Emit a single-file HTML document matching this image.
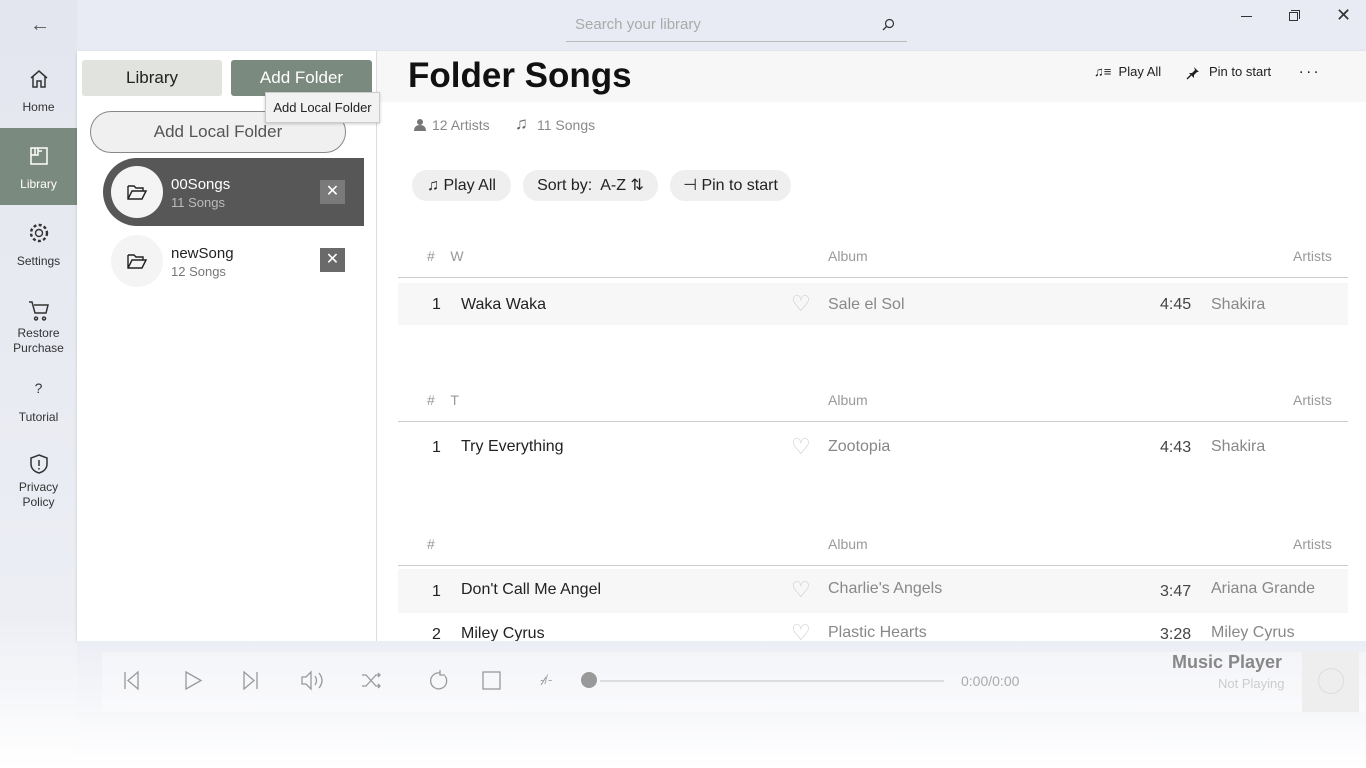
<!DOCTYPE html>
<html><head><meta charset="utf-8"><style>
*{margin:0;padding:0;box-sizing:border-box}
body{width:1366px;height:768px;overflow:hidden;font-family:"Liberation Sans",sans-serif;background:linear-gradient(180deg,#e9ebf4 0%,#eceef5 75%,#fafafc 92%,#fff 100%);position:relative;color:#222}
.abs{position:absolute}
.nav{left:0;top:0;width:77px;height:768px;background:linear-gradient(180deg,#e4e6ef,#eceef4 80%,#fff)}
.navitem{position:absolute;left:0;width:77px;text-align:center;font-size:12px;color:#333}
.navitem svg{display:block;margin:0 auto 10px}
.panel{left:77px;top:51px;width:1289px;height:590px;background:#fff;box-shadow:0 1px 3px rgba(0,0,0,.15)}
.gray{color:#888}
.hdr{font-size:14px;color:#999}
.row{font-size:16px}
.heart{color:#ccc;font-size:22px}
</style></head><body>
<div class="abs nav"></div>
<div class="abs" style="left:30px;top:14px;font-size:20px;color:#555">&#8592;</div>
<div class="abs" style="left:566px;top:14px;width:341px;height:28px;border-bottom:1px solid #bbb;"></div>
<div class="abs" style="left:575px;top:16px;font-size:15px;color:#aaa">Search your library</div>
<svg class="abs" style="left:882px;top:18px" width="13" height="13" viewBox="0 0 13 13"><circle cx="7.5" cy="5.5" r="4" fill="none" stroke="#333" stroke-width="1.2"/><path d="M4.7 8.3L1 12" stroke="#333" stroke-width="1.3"/></svg>
<div class="abs" style="left:1241px;top:16px;width:11px;height:1px;background:#333"></div>
<div class="abs" style="left:1289px;top:12px;width:9px;height:9px;border:1px solid #333"></div>
<div class="abs" style="left:1291px;top:10px;width:9px;height:9px;border-top:1px solid #333;border-right:1px solid #333"></div>
<div class="abs" style="left:1336px;top:5px;font-size:18px;color:#333">&#x2715;</div>
<div class="navitem" style="top:68px"><svg width="22" height="22" viewBox="0 0 22 22"><path d="M3 10L11 3l8 7M5 8v11h4v-6h4v6h4V8" fill="none" stroke="#333" stroke-width="1.5"/></svg>Home</div>
<div class="abs" style="left:0;top:128px;width:77px;height:77px;background:#7b8a7f"></div>
<div class="navitem" style="top:145px;color:#fff"><svg width="22" height="22" viewBox="0 0 22 22"><path d="M3 3h16v16H3zM3 10h7V3M7 3v7M10 6h4" fill="none" stroke="#fff" stroke-width="1.5"/></svg>Library</div>
<div class="navitem" style="top:222px"><svg width="22" height="22" viewBox="0 0 22 22"><circle cx="11" cy="11" r="3.5" fill="none" stroke="#333" stroke-width="1.4"/><circle cx="11" cy="11" r="8" fill="none" stroke="#333" stroke-width="2.4" stroke-dasharray="3 2.3"/></svg>Settings</div>
<div class="navitem" style="top:299px;line-height:15px"><svg width="22" height="22" viewBox="0 0 22 22" style="margin-bottom:5px"><path d="M1 3h3l3 11h11l2-8H6M8 18a1.5 1.5 0 1 0 .1 0M16 18a1.5 1.5 0 1 0 .1 0" fill="none" stroke="#333" stroke-width="1.5"/></svg>Restore<br>Purchase</div>
<div class="navitem" style="top:380px;font-size:14px">?</div>
<div class="navitem" style="top:410px">Tutorial</div>
<div class="navitem" style="top:453px;line-height:15px"><svg width="22" height="22" viewBox="0 0 22 22" style="margin-bottom:5px"><path d="M11 2l8 3v6c0 5-4 8-8 9-4-1-8-4-8-9V5z M11 7v6M11 15v1.5" fill="none" stroke="#333" stroke-width="1.5"/></svg>Privacy<br>Policy</div>

<div class="abs panel"></div>
<div class="abs" style="left:376px;top:51px;width:1px;height:590px;background:#ddd"></div>
<div class="abs" style="left:377px;top:51px;width:989px;height:51px;background:#f7f7f7"></div>
<div class="abs" style="left:82px;top:60px;width:140px;height:36px;background:#e0e3de;border-radius:3px;text-align:center;line-height:36px;font-size:17px">Library</div>
<div class="abs" style="left:231px;top:60px;width:141px;height:36px;background:#7b8a7f;border-radius:3px;text-align:center;line-height:36px;font-size:17px;color:#fff">Add Folder</div>
<div class="abs" style="left:90px;top:111px;width:256px;height:42px;border:1px solid #888;border-radius:21px;background:#f0f0f0;text-align:center;line-height:40px;font-size:17px;color:#555">Add Local Folder</div>
<div class="abs" style="left:265px;top:92px;width:115px;height:31px;background:#f2f2f2;border:1px solid #ccc;box-shadow:0 1px 3px rgba(0,0,0,.2);font-size:13px;line-height:29px;text-align:center">Add Local Folder</div>
<div class="abs" style="left:103px;top:158px;width:261px;height:68px;background:#575757;border-radius:34px 0 0 34px"></div>
<div class="abs" style="left:111px;top:166px;width:52px;height:52px;border-radius:50%;background:#f4f4f4"></div>
<div class="abs" style="left:111px;top:235px;width:52px;height:52px;border-radius:50%;background:#f4f4f4"></div>
<svg class="abs" style="left:127px;top:183px" width="20" height="18" viewBox="0 0 20 18"><path d="M1 3h6l2 2h7v3M1 3v13h14l4-8H5L1 16" fill="none" stroke="#222" stroke-width="1.4"/></svg>
<svg class="abs" style="left:127px;top:252px" width="20" height="18" viewBox="0 0 20 18"><path d="M1 3h6l2 2h7v3M1 3v13h14l4-8H5L1 16" fill="none" stroke="#222" stroke-width="1.4"/></svg>
<div class="abs" style="left:171px;top:176px;font-size:15px;color:#fff">00Songs</div>
<div class="abs" style="left:171px;top:195px;font-size:13px;color:#bbb">11 Songs</div>
<div class="abs" style="left:171px;top:245px;font-size:15px;color:#222">newSong</div>
<div class="abs" style="left:171px;top:264px;font-size:13px;color:#777">12 Songs</div>
<div class="abs" style="left:320px;top:180px;width:25px;height:24px;background:#7a7a7a;color:#fff;text-align:center;line-height:24px;font-size:16px">&#x2715;</div>
<div class="abs" style="left:320px;top:248px;width:25px;height:24px;background:#6a6a6a;color:#fff;text-align:center;line-height:24px;font-size:16px">&#x2715;</div>
<div class="abs" style="left:408px;top:56px;font-size:35px;font-weight:bold;color:#111">Folder Songs</div>
<div class="abs" style="left:1094px;top:64px;font-size:13px">&#9835;&#8801;&nbsp; Play All</div>
<svg class="abs" style="left:1186px;top:66px" width="14" height="14" viewBox="0 0 14 14"><path d="M8 1l5 5-2 0-3 3 0 3-5-5 3 0 3-3z" fill="#222"/><path d="M5 9L1 13" stroke="#222" stroke-width="1.4"/></svg>
<div class="abs" style="left:1209px;top:64px;font-size:13px">Pin to start</div>
<div class="abs" style="left:1299px;top:60px;font-size:16px;letter-spacing:3px">...</div>
<svg class="abs" style="left:414px;top:118px" width="12" height="14" viewBox="0 0 12 14"><circle cx="6" cy="4" r="3" fill="#777"/><path d="M0 13q0-6 6-6t6 6z" fill="#777"/></svg>
<div class="abs gray" style="left:432px;top:117px;font-size:14px">12 Artists</div>
<div class="abs gray" style="left:515px;top:114px;font-size:17px;color:#666">&#9835;</div>
<div class="abs gray" style="left:537px;top:117px;font-size:14px">11 Songs</div>
<div class="abs" style="left:412px;top:170px;width:99px;height:31px;background:#efefef;border-radius:15px;font-size:16px;line-height:31px;text-align:center">&#9835; Play All</div>
<div class="abs" style="left:523px;top:170px;width:135px;height:31px;background:#efefef;border-radius:15px;font-size:16px;line-height:31px;text-align:center">Sort by:&nbsp; A-Z &#8645;</div>
<div class="abs" style="left:670px;top:170px;width:121px;height:31px;background:#efefef;border-radius:15px;font-size:16px;line-height:31px;text-align:center">&#8867; Pin to start</div>
<div class="abs hdr" style="left:427px;top:248px">#&nbsp;&nbsp;&nbsp;&nbsp;W</div>
<div class="abs hdr" style="left:828px;top:248px">Album</div><div class="abs hdr" style="left:1293px;top:248px">Artists</div>
<div class="abs" style="left:398px;top:277px;width:950px;height:1px;background:#ccc"></div>
<div class="abs" style="left:398px;top:283px;width:950px;height:42px;background:#f7f7f7"></div>
<div class="abs row" style="left:432px;top:296px">1</div><div class="abs row" style="left:461px;top:296px">Waka Waka</div>
<div class="abs heart" style="left:791px;top:291px">&#9825;</div>
<div class="abs row gray" style="left:828px;top:296px">Sale el Sol</div><div class="abs row" style="left:1160px;top:296px;color:#444">4:45</div><div class="abs row gray" style="left:1211px;top:296px">Shakira</div>
<div class="abs hdr" style="left:427px;top:392px">#&nbsp;&nbsp;&nbsp;&nbsp;T</div>
<div class="abs hdr" style="left:828px;top:392px">Album</div><div class="abs hdr" style="left:1293px;top:392px">Artists</div>
<div class="abs" style="left:398px;top:421px;width:950px;height:1px;background:#ccc"></div>
<div class="abs row" style="left:432px;top:439px">1</div><div class="abs row" style="left:461px;top:438px">Try Everything</div>
<div class="abs heart" style="left:791px;top:434px">&#9825;</div>
<div class="abs row gray" style="left:828px;top:438px">Zootopia</div><div class="abs row" style="left:1160px;top:439px;color:#444">4:43</div><div class="abs row gray" style="left:1211px;top:438px">Shakira</div>
<div class="abs hdr" style="left:427px;top:536px">#</div>
<div class="abs hdr" style="left:828px;top:536px">Album</div><div class="abs hdr" style="left:1293px;top:536px">Artists</div>
<div class="abs" style="left:398px;top:565px;width:950px;height:1px;background:#ccc"></div>
<div class="abs" style="left:398px;top:569px;width:950px;height:44px;background:#f7f7f7"></div>
<div class="abs row" style="left:432px;top:583px">1</div><div class="abs row" style="left:461px;top:581px">Don't Call Me Angel</div>
<div class="abs heart" style="left:791px;top:577px">&#9825;</div>
<div class="abs row gray" style="left:828px;top:580px">Charlie's Angels</div><div class="abs row" style="left:1160px;top:583px;color:#444">3:47</div><div class="abs row gray" style="left:1211px;top:580px">Ariana Grande</div>
<div class="abs row" style="left:432px;top:626px">2</div><div class="abs row" style="left:461px;top:625px">Miley Cyrus</div>
<div class="abs heart" style="left:791px;top:620px">&#9825;</div>
<div class="abs row gray" style="left:828px;top:624px">Plastic Hearts</div><div class="abs row" style="left:1160px;top:626px;color:#444">3:28</div><div class="abs row gray" style="left:1211px;top:624px">Miley Cyrus</div>
<div class="abs" style="left:77px;top:641px;width:1289px;height:127px;background:linear-gradient(180deg,#eceef5,#f6f7fa 50%,#fff)"></div>
<div class="abs" style="left:102px;top:652px;width:1264px;height:60px;background:rgba(255,255,255,.35)"></div>
<svg class="abs" style="left:120px;top:668px" width="920" height="26" viewBox="0 0 920 26" fill="none" stroke="#999" stroke-width="1.3">
<path d="M5 4v17M18 4l-10 8.5L18 21z"/>
<path d="M66 4v17l15-8.5z"/>
<path d="M124 4l10 8.5L124 21zM137 4v17"/>
<path d="M182 9h4l5-5v17l-5-5h-4zM195 8q3 4.5 0 9M199 5q6 7.5 0 15"/>
<path d="M242 7h4l10 11h4M242 18h4l10-11h4M258 5l2 2-2 2M258 16l2 2-2 2"/>
<path d="M320 5a8 8 0 1 0 5 3M320 2v5h5"/>
<rect x="363" y="4" width="17" height="17"/>
<path d="M421 17l5-8" stroke-width="1"/>
<path d="M480 13h344" stroke="#ddd" stroke-width="2"/>
</svg>
<div class="abs" style="left:540px;top:672px;font-size:13px;color:#aaa">-/-</div>
<div class="abs" style="left:581px;top:672px;width:16px;height:16px;border-radius:50%;background:#999"></div>
<div class="abs" style="left:961px;top:673px;font-size:14px;color:#aaa">0:00/0:00</div>
<div class="abs" style="left:1172px;top:652px;font-size:18px;font-weight:bold;color:#888">Music Player</div>
<div class="abs" style="left:1218px;top:676px;font-size:13px;color:#ccc">Not Playing</div>
<div class="abs" style="left:1302px;top:652px;width:57px;height:60px;background:#eee"></div>
<div class="abs" style="left:1318px;top:668px;width:26px;height:26px;border-radius:50%;border:1px solid #ddd"></div>
</body></html>
